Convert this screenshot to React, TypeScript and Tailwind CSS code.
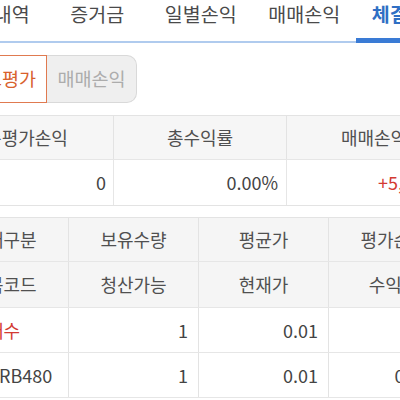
import React from "react";

const font = { fontFamily: '"Noto Sans CJK KR", "Noto Sans", sans-serif' };

function Tabs() {
  const tabs = ["잔고내역", "증거금", "일별손익", "매매손익", "체결내역"];
  return (
    <div className="flex ml-[-58px] w-[520px] border-b-2 border-[#b0cbee]">
      {tabs.map((t, i) =>
        i === 4 ? (
          <div
            key={t}
            className="w-[103.5px] h-[43px] -mb-[2px] border-b-[5px] border-[#3a7bd5] flex justify-center items-start pt-[1px] text-[19.5px] leading-[26px] font-bold text-[#2f6fc4] shrink-0"
          >
            {t}
          </div>
        ) : (
          <div
            key={t}
            className="w-[103.5px] h-[41px] flex justify-center items-start pt-[1px] text-[19.5px] leading-[26px] text-[#4a4a4a] shrink-0"
          >
            {t}
          </div>
        )
      )}
    </div>
  );
}

function Segment() {
  return (
    <div className="flex mt-[12px] ml-[-43px] h-[48px]">
      <div className="h-full w-[90px] flex items-center justify-center border-[1.5px] border-[#e07a50] bg-white text-[18.5px] text-[#d8612c] shrink-0">
        잔고평가
      </div>
      <div className="h-full w-[90px] flex items-center justify-center border border-l-0 border-[#d9d9d9] bg-[#efefef] rounded-r-[10px] text-[18.5px] text-[#acacac] shrink-0">
        매매손익
      </div>
    </div>
  );
}

function SummaryTable() {
  return (
    <div className="mt-[12px] ml-[-60px] w-[521px] border-t border-b border-[#e3e3e3]">
      <div className="grid grid-cols-[174px_173px_174px] h-[44px] bg-[#f6f6f6] border-b border-[#e6e6e6] text-[18px] text-[#505050]">
        <div className="flex items-center justify-center border-r border-[#e3e3e3]">총평가손익</div>
        <div className="flex items-center justify-center border-r border-[#e3e3e3]">총수익률</div>
        <div className="flex items-center justify-center">매매손익</div>
      </div>
      <div className="grid grid-cols-[174px_173px_174px] h-[45px] bg-white text-[18px] text-[#444444]">
        <div className="flex items-center justify-end pr-[7px] border-r border-[#e6e6e6]">0</div>
        <div className="flex items-center justify-end pr-[8px] border-r border-[#e6e6e6]">0.00%</div>
        <div className="flex items-center justify-end pr-[3px] text-[#d33a32]">+5,000.00</div>
      </div>
    </div>
  );
}

function Row({
  cells,
  header,
  h,
}: {
  cells: { t: string; cls?: string }[];
  header?: boolean;
  h: string;
}) {
  return (
    <div
      className={
        "grid grid-cols-[130px_130px_130px_130px] border-b border-[#e6e6e6] text-[18px] " +
        h +
        (header ? " bg-[#f5f5f5] text-[#505050]" : " bg-white text-[#444444]")
      }
    >
      {cells.map((c, i) => (
        <div
          key={i}
          className={
            "flex items-center border-r border-[#e3e3e3] " +
            (c.cls ?? (header ? "justify-center" : "justify-end pr-[10px]"))
          }
        >
          {c.t}
        </div>
      ))}
    </div>
  );
}

function PositionTable() {
  return (
    <div className="mt-[11px] ml-[-61px] w-[520px] border-t border-[#e3e3e3]">
      <Row
        header
        h="h-[44px]"
        cells={[{ t: "매매구분" }, { t: "보유수량" }, { t: "평균가" }, { t: "평가손익" }]}
      />
      <Row
        header
        h="h-[46px]"
        cells={[{ t: "종목코드" }, { t: "청산가능" }, { t: "현재가" }, { t: "수익률" }]}
      />
      <Row
        h="h-[45px]"
        cells={[
          { t: "매수", cls: "justify-center text-[#d33a32]" },
          { t: "1" },
          { t: "0.01" },
          { t: "0" },
        ]}
      />
      <Row
        h="h-[45px]"
        cells={[
          { t: "SHFERB480", cls: "justify-center" },
          { t: "1" },
          { t: "0.01" },
          { t: "0.00%", cls: "justify-end pr-[12px]" },
        ]}
      />
    </div>
  );
}

export default function App() {
  return (
    <div className="w-[400px] h-[400px] overflow-hidden bg-white" style={font}>
      <Tabs />
      <Segment />
      <SummaryTable />
      <PositionTable />
    </div>
  );
}
